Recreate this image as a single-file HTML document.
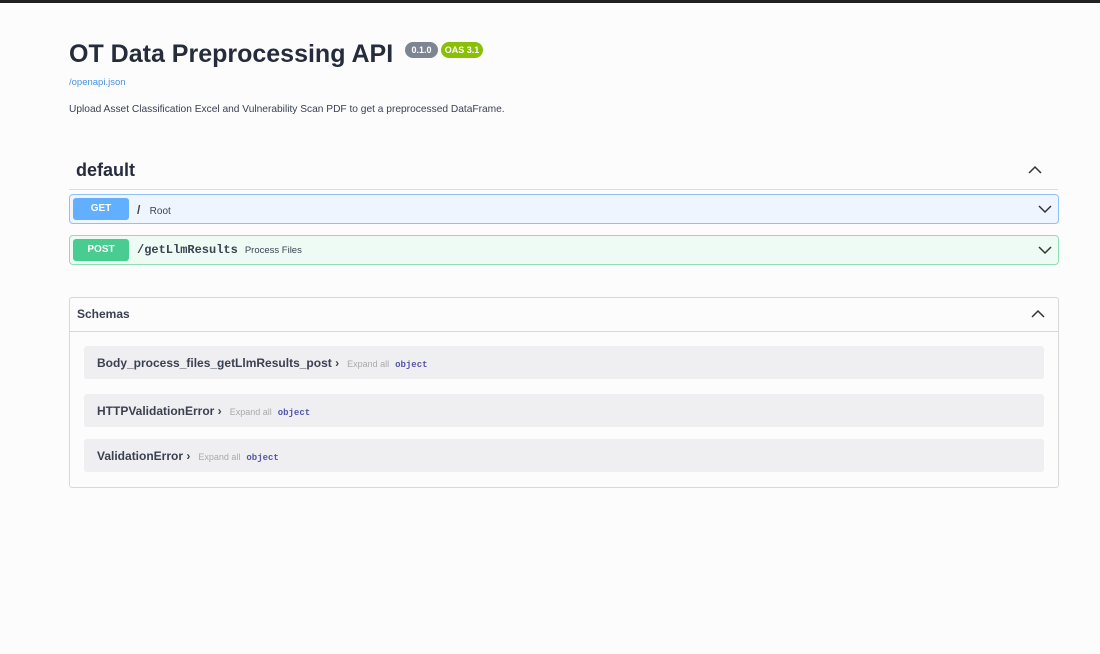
<!DOCTYPE html>
<html><head><meta charset="utf-8"><style>
body{margin:0;width:1100px;height:654px;background:#fcfcfd;font-family:"Liberation Sans",sans-serif;color:#3b4151;position:relative;overflow:hidden}
.top{position:absolute;left:0;top:0;width:1100px;height:3px;background:#222}
.abs{position:absolute}
h1{position:absolute;left:69px;top:40px;margin:0;font-size:25px;font-weight:bold;color:#262c3c;white-space:nowrap;letter-spacing:0}
.badge{position:absolute;top:42px;height:16px;border-radius:8px;color:#fff;font-size:9px;font-weight:bold;line-height:16px;text-align:center}
.op{position:absolute;left:69px;width:988px;height:28px;border:1px solid;border-radius:4px}
.btn{position:absolute;left:3px;top:3px;width:56px;height:22px;border-radius:3px;color:#fff;font-weight:bold;font-size:10px;line-height:22px;text-align:center}
.row{position:absolute;left:84px;width:960px;height:33px;background:#efeef1;border-radius:3px}
.row .n{position:absolute;left:13px;top:10px;font-size:12px;font-weight:bold;color:#3b4151;white-space:nowrap}
.ea{color:#aaa;font-size:9px;font-weight:normal;margin-left:8px}
.ob{color:#55a;font-family:"Liberation Mono",monospace;font-size:9px;font-weight:bold;margin-left:6px}
svg.ch{position:absolute}
</style></head><body>
<div class="top"></div>
<h1>OT Data Preprocessing API</h1>
<div class="badge" style="left:405px;width:33px;background:#7d8492">0.1.0</div>
<div class="badge" style="left:441px;width:42px;background:#89bf04">OAS 3.1</div>
<div class="abs" style="left:69px;top:77px;font-size:9.5px;color:#4990e2">/openapi.json</div>
<div class="abs" style="left:69px;top:104px;font-size:10.2px;color:#3b4151">Upload Asset Classification Excel and Vulnerability Scan PDF to get a preprocessed DataFrame.</div>
<div class="abs" style="left:76px;top:160px;font-size:18px;font-weight:bold;color:#262c3c">default</div>
<svg class="ch" style="left:1028px;top:165px" width="14" height="10"><path d="M1 8 L7 2 L13 8" stroke="#333" stroke-width="1.5" fill="none"/></svg>
<div class="abs" style="left:69px;top:189px;width:989px;height:1px;background:#dcdde0"></div>
<div class="op" style="top:194px;background:#eff5fe;border-color:#8fc1f5">
 <div class="btn" style="background:#61affe">GET</div>
 <div class="abs" style="left:67px;top:8px;font-size:12px;font-weight:bold">/ <span style="font-size:10px;font-weight:normal;margin-left:6px">Root</span></div>
 <svg class="ch" style="left:968px;top:9px" width="14" height="10"><path d="M1 2 L7 8 L13 2" stroke="#333" stroke-width="1.5" fill="none"/></svg>
</div>
<div class="op" style="top:235px;background:#eefbf4;border-color:#8ee0b4">
 <div class="btn" style="background:#49cc90">POST</div>
 <div class="abs" style="left:67px;top:7px;font-size:12px;font-weight:bold;font-family:'Liberation Mono',monospace">/getLlmResults<span style="font-family:'Liberation Sans',sans-serif;font-size:9.5px;font-weight:normal;margin-left:7px">Process Files</span></div>
 <svg class="ch" style="left:968px;top:9px" width="14" height="10"><path d="M1 2 L7 8 L13 2" stroke="#333" stroke-width="1.5" fill="none"/></svg>
</div>
<div class="abs" style="left:69px;top:297px;width:988px;height:189px;border:1px solid #d8d8dc;border-radius:3px;background:#fcfcfd">
 <div class="abs" style="left:7px;top:9px;font-size:12px;font-weight:bold">Schemas</div>
 <svg class="ch" style="left:961px;top:11px" width="14" height="10"><path d="M1 8 L7 2 L13 8" stroke="#333" stroke-width="1.5" fill="none"/></svg>
 <div class="abs" style="left:0;top:33px;width:988px;height:1px;background:#d8d8dc"></div>
</div>
<div class="row" style="top:346px"><div class="n">Body_process_files_getLlmResults_post &#8250;<span class="ea">Expand all</span><span class="ob">object</span></div></div>
<div class="row" style="top:394px"><div class="n">HTTPValidationError &#8250;<span class="ea">Expand all</span><span class="ob">object</span></div></div>
<div class="row" style="top:439px"><div class="n">ValidationError &#8250;<span class="ea">Expand all</span><span class="ob">object</span></div></div>
</body></html>
